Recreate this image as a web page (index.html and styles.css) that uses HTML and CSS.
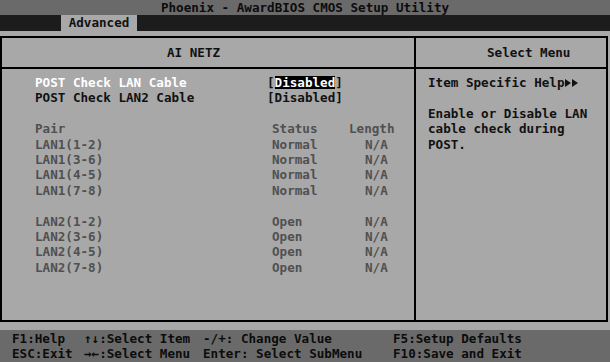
FILE: index.html
```html
<!DOCTYPE html>
<html>
<head>
<meta charset="utf-8">
<link rel="stylesheet" href="styles.css">
</head>
<body>
<div class="screen">
  <div class="title">Phoenix - AwardBIOS CMOS Setup Utility</div>
  <div class="menubar"><span class="tab">Advanced</span></div>
  <div class="main">
    <div class="box">
      <div class="panel">
        <div class="head head-left">AI NETZ</div>
        <div class="content content-left">
          <div class="setting"><span class="lbl sel">POST Check LAN Cable</span><span class="val">[<span class="hl">Disabled</span>]</span></div>
          <div class="setting"><span class="lbl">POST Check LAN2 Cable</span><span class="val">[Disabled]</span></div>
          <div class="blank"></div>
          <div class="trow"><span>Pair</span><span>Status</span><span>Length</span></div>
          <div class="trow"><span>LAN1(1-2)</span><span>Normal</span><span class="na">N/A</span></div>
          <div class="trow"><span>LAN1(3-6)</span><span>Normal</span><span class="na">N/A</span></div>
          <div class="trow"><span>LAN1(4-5)</span><span>Normal</span><span class="na">N/A</span></div>
          <div class="trow"><span>LAN1(7-8)</span><span>Normal</span><span class="na">N/A</span></div>
          <div class="blank"></div>
          <div class="trow"><span>LAN2(1-2)</span><span>Open</span><span class="na">N/A</span></div>
          <div class="trow"><span>LAN2(3-6)</span><span>Open</span><span class="na">N/A</span></div>
          <div class="trow"><span>LAN2(4-5)</span><span>Open</span><span class="na">N/A</span></div>
          <div class="trow"><span>LAN2(7-8)</span><span>Open</span><span class="na">N/A</span></div>
        </div>
      </div>
      <div class="panel panel-right">
        <div class="head head-right">Select Menu</div>
        <div class="content content-right">
          <div class="line">Item Specific Help<svg class="tri" width="15" height="8" viewBox="0 0 15 8"><path d="M0 0 L6 4 L0 8 Z M7 0 L13 4 L7 8 Z" fill="#111"/></svg></div>
          <div class="blank"></div>
          <div class="line">Enable or Disable LAN</div>
          <div class="line">cable check during</div>
          <div class="line">POST.</div>
        </div>
      </div>
    </div>
  </div>
  <div class="footer">
    <span>F1:Help</span><span>&#8593;&#8595;:Select Item</span><span>-/+: Change Value</span><span>F5:Setup Defaults</span>
    <span>ESC:Exit</span><span>&#8594;&#8592;:Select Menu</span><span>Enter: Select SubMenu</span><span>F10:Save and Exit</span>
  </div>
</div>
</body>
</html>
```

FILE: styles.css
```css
html, body {
  margin: 0;
  padding: 0;
  background: #a8a8a8;
}
.screen {
  width: 610px;
  height: 362px;
  overflow: hidden;
  font-family: "DejaVu Sans Mono", "Liberation Mono", monospace;
  font-weight: bold;
  font-size: 12.6px;
  color: #000;
  background: #a8a8a8;
  white-space: nowrap;
}
.title {
  height: 15px;
  line-height: 15px;
  background: #6a6a6a;
  color: #0c0c0c;
  text-align: center;
}
.menubar {
  height: 16px;
  line-height: 16px;
  background: #1c1c1c;
  display: flex;
}
.tab {
  margin-left: 61px;
  width: 76px;
  text-align: center;
  background: #a8a8a8;
  color: #111;
}
.main {
  height: 299px;
  padding-top: 5px;
  box-sizing: border-box;
}
.box {
  width: 608px;
  height: 286px;
  box-sizing: border-box;
  border: 2px solid #000;
  display: grid;
  grid-template-columns: 412px 192px;
}
.panel {
  display: flex;
  flex-direction: column;
  min-height: 0;
}
.panel-right {
  border-left: 2px solid #000;
}
.head {
  height: 29px;
  line-height: 29px;
  border-bottom: 2px solid #000;
  color: #111;
}
.head-left {
  padding-left: 165px;
}
.head-right {
  padding-left: 71px;
}
.content {
  padding-top: 6px;
  line-height: 15.4px;
}
.content-left {
  padding-left: 33px;
}
.content-right {
  padding-left: 12px;
  color: #111;
}
.line {
  height: 15.4px;
}
.blank {
  height: 15.4px;
}
.setting {
  display: grid;
  grid-template-columns: 232px auto;
  height: 15.4px;
  color: #111;
}
.sel {
  color: #fff;
}
.hl {
  background: #000;
  color: #fff;
  display: inline-block;
  line-height: 13px;
}
.trow {
  display: grid;
  grid-template-columns: 237px 77px auto;
  height: 15.4px;
  color: #505050;
}
.na {
  padding-left: 16px;
}
.tri {
  vertical-align: 0px;
  margin-left: 1px;
}
.footer {
  height: 32px;
  background: #6a6a6a;
  box-sizing: border-box;
  padding-left: 12px;
  padding-top: 1px;
  display: grid;
  grid-template-columns: 72px 119px 190px auto;
  grid-auto-rows: 15px;
  line-height: 15px;
  color: #0c0c0c;
}
```
